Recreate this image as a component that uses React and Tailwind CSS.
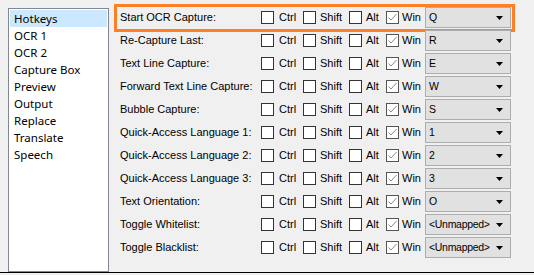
const pages = [
  "Hotkeys",
  "OCR 1",
  "OCR 2",
  "Capture Box",
  "Preview",
  "Output",
  "Replace",
  "Translate",
  "Speech",
];

const hotkeys = [
  { label: "Start OCR Capture:", key: "Q" },
  { label: "Re-Capture Last:", key: "R" },
  { label: "Text Line Capture:", key: "E" },
  { label: "Forward Text Line Capture:", key: "W" },
  { label: "Bubble Capture:", key: "S" },
  { label: "Quick-Access Language 1:", key: "1" },
  { label: "Quick-Access Language 2:", key: "2" },
  { label: "Quick-Access Language 3:", key: "3" },
  { label: "Text Orientation:", key: "O" },
  { label: "Toggle Whitelist:", key: "<Unmapped>" },
  { label: "Toggle Blacklist:", key: "<Unmapped>" },
];

const Check = ({ label, checked, width, gap }) => (
  <div className={`flex items-center shrink-0 ${width}`}>
    <div
      className={`w-[13px] h-[13px] shrink-0 bg-white border ${
        checked ? "border-[#555555]" : "border-[#333333]"
      }`}
    >
      {checked && (
        <svg width="11" height="11" viewBox="0 0 11 11">
          <polyline
            points="1.5,5.5 4,8 9.5,2"
            fill="none"
            stroke="#8a8a8a"
            strokeWidth="1"
          />
        </svg>
      )}
    </div>
    <span className={gap}>{label}</span>
  </div>
);

const App = () => {
  return (
    <div
      className="w-[534px] h-[275px] bg-[#f0f0f0] flex flex-col overflow-hidden text-black"
      style={{ fontFamily: '"Noto Sans", sans-serif' }}
    >
      <div className="flex flex-1 pl-[8px] pt-[6px]">
        {/* Page list */}
        <div className="w-[101px] mt-[2px] bg-white border border-[#828790] p-px text-[11.5px]">
          {pages.map((p, i) => (
            <div
              key={p}
              className={`h-[17px] leading-[17px] pl-[4px] ${
                i === 0 ? "bg-[#cce8ff]" : ""
              }`}
            >
              {p}
            </div>
          ))}
        </div>

        {/* Hotkey rows */}
        <div
          className="flex flex-col text-[11px]"
          style={{ fontFamily: '"Liberation Sans", Arial, sans-serif' }}
        >
          {hotkeys.map((h, i) => (
            <div key={i} className="relative flex items-center h-[23px] pl-[11px] whitespace-nowrap">
              {i === 0 && (
                <div className="absolute left-[5px] top-[-2px] w-[401px] h-[28px] border-[3px] border-[#ff7f27]"></div>
              )}
              <div className="w-[141px] shrink-0">{h.label}</div>
              <Check label="Ctrl" width="w-[42px]" gap="ml-[5px]" />
              <Check label="Shift" width="w-[46px]" gap="ml-[4px]" />
              <Check label="Alt" width="w-[37px]" gap="ml-[4px]" />
              <Check label="Win" checked width="w-[39px]" gap="ml-[3px]" />
              <div className="w-[86px] h-[21px] shrink-0 flex items-center justify-between bg-[#e1e1e1] border border-[#adadad] pl-[3px] pr-[7px]">
                <span className="text-[10.5px] tracking-[-0.3px]">{h.key}</span>
                <svg width="7" height="4" viewBox="0 0 7 4">
                  <polygon points="0,0 7,0 3.5,4" fill="#000000" />
                </svg>
              </div>
            </div>
          ))}
        </div>
      </div>
      <div className="h-px bg-black"></div>
      <div className="h-[2px]"></div>
    </div>
  );
};

export default App;
